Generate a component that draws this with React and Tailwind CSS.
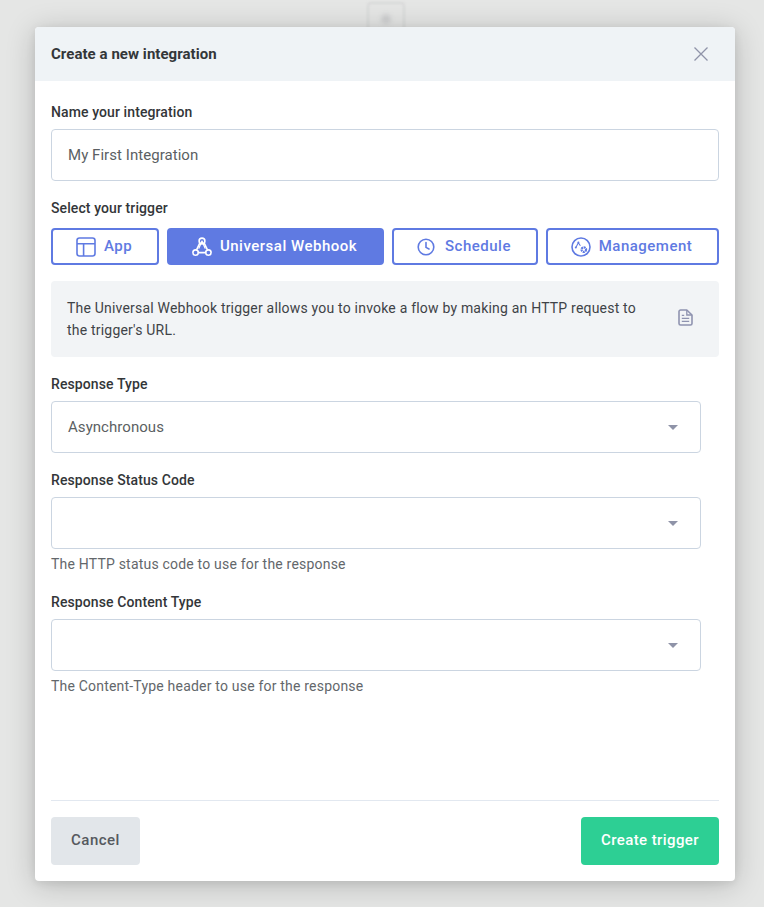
import React from "react";

const AppIcon = () => (
  <svg width="20" height="20" viewBox="0 0 20 20" fill="none" stroke="currentColor" strokeWidth="1.6">
    <rect x="1" y="1" width="18" height="18" rx="2.5" />
    <path d="M1 6.8h18M7.6 6.8V19" />
  </svg>
);

const WebhookIcon = () => (
  <svg width="20" height="20" viewBox="0 0 20 20" fill="none" stroke="currentColor" strokeWidth="1.6" strokeLinecap="round">
    <circle cx="10" cy="4" r="2.9" />
    <circle cx="3.6" cy="15.6" r="2.7" />
    <circle cx="16.4" cy="15.6" r="2.7" />
    <path d="M7.8 6.2 4.9 12.2M12.2 6.2l2.9 6M6.4 15.6h7.2" />
    <path d="M10 4 6.9 11.2M10 4l3.1 7.2" strokeWidth="1.2" />
  </svg>
);

const ClockIcon = () => (
  <svg width="18" height="18" viewBox="0 0 18 18" fill="none" stroke="currentColor" strokeWidth="1.6">
    <circle cx="9" cy="9" r="7.8" />
    <path d="M9 4.6V9.4l3 1.6" strokeLinecap="round" strokeLinejoin="round" />
  </svg>
);

const ManagementIcon = () => (
  <svg width="20" height="20" viewBox="0 0 20 20" fill="none" stroke="currentColor" strokeWidth="1.6">
    <circle cx="10" cy="10" r="9" />
    <circle cx="12.8" cy="12.6" r="2.3" strokeWidth="2.2" strokeDasharray="1.8 0.6" />
    <path d="M5 10.2 7.3 5.8 9.4 8.8" strokeWidth="1.1" />
    <circle cx="4.8" cy="10.4" r="1" fill="currentColor" stroke="none" />
    <circle cx="7.4" cy="5.6" r="1" fill="currentColor" stroke="none" />
  </svg>
);

const DocIcon = () => (
  <svg width="15" height="17" viewBox="0 0 15 17" fill="none" stroke="#8f93b0" strokeWidth="1.6">
    <path d="M2.6 1h6.2L14 6v8.4a1.6 1.6 0 0 1-1.6 1.6H2.6A1.6 1.6 0 0 1 1 14.4V2.6A1.6 1.6 0 0 1 2.6 1Z" strokeLinejoin="round" />
    <path d="M8.8 1v5H14M3.8 6.4h2.4M3.8 9.4h7.4M3.8 12.4h7.4" strokeWidth="1.3" />
  </svg>
);

const triggers = [
  { name: "App", icon: <AppIcon />, width: "w-[108px]", gap: "gap-2" },
  { name: "Universal Webhook", icon: <WebhookIcon />, width: "w-[217px]", gap: "gap-2", active: true },
  { name: "Schedule", icon: <ClockIcon />, width: "w-[146px]", gap: "gap-[10px]" },
  { name: "Management", icon: <ManagementIcon />, width: "w-[173px]", gap: "gap-2" },
];

const Label = ({ children, className = "" }) => (
  <div className={`text-[14px] leading-[20px] font-medium tracking-[0.1px] text-[#333639] ${className}`}>{children}</div>
);

const Select = ({ value }) => (
  <div className="mt-[7px] flex h-[52px] w-[650px] items-center justify-between rounded-[4px] border border-[#cbd5e1] bg-white pl-4 pr-[22px] text-[15px] tracking-[0.05px] text-[#5b5f63]">
    <span>{value}</span>
    <span className="h-0 w-0 border-x-[5px] border-t-[5px] border-x-transparent border-t-[#8f93a8]" />
  </div>
);

const Help = ({ children }) => (
  <div className="mt-[6px] text-[14px] leading-[18px] tracking-[0.2px] text-[#63676b]">{children}</div>
);

export default function App() {
  return (
    <div className="relative h-[907px] w-[764px] overflow-hidden bg-[#e5e6e5] font-['Roboto',sans-serif]">
      {/* blurred page behind the modal */}
      <div className="absolute left-[367px] top-[2px] h-[36px] w-[38px] rounded-[4px] border-2 border-[#d8d9d9] blur-[1px]" />
      <div className="absolute left-[381px] top-[14px] h-[10px] w-[10px] rounded-full bg-[#cfd0d1] blur-[2px]" />

      <div className="relative ml-[35px] mt-[27px] flex h-[854px] w-[700px] flex-col overflow-hidden rounded-[4px] bg-white shadow-[0_4px_30px_rgba(0,0,0,0.2),0_2px_10px_rgba(0,0,0,0.08)]">
        <div className="flex h-[54px] shrink-0 items-center justify-between bg-[#eff3f6] pl-4 pr-[26px]">
          <span className="text-[15px] font-bold tracking-[0.05px] text-[#333639]">Create a new integration</span>
          <svg width="16" height="16" viewBox="0 0 16 16" stroke="#8f93a8" strokeWidth="1.3">
            <path d="M1.5 1.5l13 13M14.5 1.5l-13 13" />
          </svg>
        </div>

        <div className="flex flex-1 flex-col px-4 pt-[21px] pb-4">
          <Label>Name your integration</Label>
          <div className="mt-[7px] flex h-[52px] items-center rounded-[4px] border border-[#cbd5e1] px-4 text-[15px] tracking-[0.05px] text-[#5b5f63]">
            My First Integration
          </div>

          <Label className="mt-[17px]">Select your trigger</Label>
          <div className="mt-[10px] flex justify-between">
            {triggers.map((t) => (
              <div
                key={t.name}
                className={`flex h-[37px] items-center justify-center rounded-[4px] border-2 border-[#5f7ae2] pr-[2px] text-[15px] font-medium tracking-[0.5px] ${t.width} ${t.gap} ${
                  t.active ? "bg-[#5f7ae2] text-white" : "bg-white text-[#5f7ae2]"
                }`}
              >
                {t.icon}
                <span>{t.name}</span>
              </div>
            ))}
          </div>

          <div className="mt-4 flex h-[76px] items-center justify-between rounded-[4px] bg-[#f2f4f6] pb-1 pl-4 pr-[26px]">
            <p className="mt-1 w-[590px] text-[14px] leading-[22px] tracking-[0.2px] text-[#3f4347]">
              The Universal Webhook trigger allows you to invoke a flow by making an HTTP request to the trigger's URL.
            </p>
            <DocIcon />
          </div>

          <Label className="mt-[17px]">Response Type</Label>
          <Select value="Asynchronous" />

          <Label className="mt-[17px]">Response Status Code</Label>
          <Select value="" />
          <Help>The HTTP status code to use for the response</Help>

          <Label className="mt-[19px]">Response Content Type</Label>
          <Select value="" />
          <Help>The Content-Type header to use for the response</Help>

          <div className="mt-auto flex items-center justify-between border-t border-[#e2e8f0] pt-4">
            <div className="flex h-12 w-[89px] items-center justify-center rounded-[4px] bg-[#e2e6ea] pb-[2px] text-[15px] font-medium tracking-[0.5px] text-[#55595e]">
              Cancel
            </div>
            <div className="flex h-12 w-[138px] items-center justify-center rounded-[4px] bg-[#2dcf94] pb-[2px] text-[15px] font-medium tracking-[0.4px] text-white">
              Create trigger
            </div>
          </div>
        </div>
      </div>
    </div>
  );
}
